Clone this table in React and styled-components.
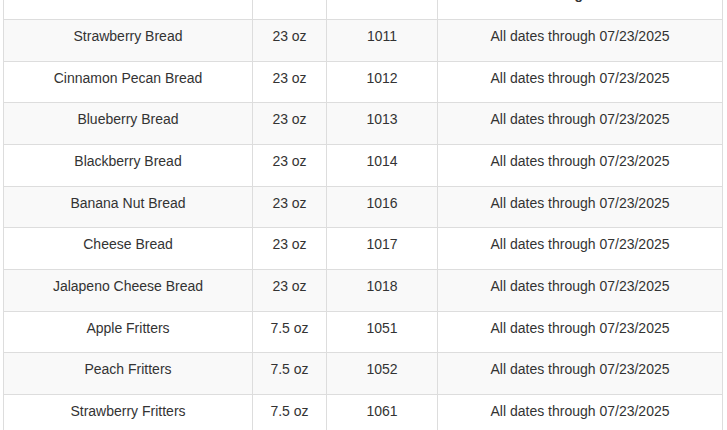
import styled, { createGlobalStyle } from 'styled-components';

const GlobalStyle = createGlobalStyle`
  html, body {
    margin: 0;
    padding: 0;
    background: #fff;
    overflow: hidden;
  }
  body {
    font-family: "Liberation Sans", Arial, Helvetica, sans-serif;
    font-size: 14px;
    color: #333;
  }
`;

const products = [
  { name: 'Strawberry Bread', size: '23 oz', code: '1011' },
  { name: 'Cinnamon Pecan Bread', size: '23 oz', code: '1012' },
  { name: 'Blueberry Bread', size: '23 oz', code: '1013' },
  { name: 'Blackberry Bread', size: '23 oz', code: '1014' },
  { name: 'Banana Nut Bread', size: '23 oz', code: '1016' },
  { name: 'Cheese Bread', size: '23 oz', code: '1017' },
  { name: 'Jalapeno Cheese Bread', size: '23 oz', code: '1018' },
  { name: 'Apple Fritters', size: '7.5 oz', code: '1051' },
  { name: 'Peach Fritters', size: '7.5 oz', code: '1052' },
  { name: 'Strawberry Fritters', size: '7.5 oz', code: '1061' },
];

const Wrapper = styled.div`
  padding: 0 4px 0 3px;
`;

const Table = styled.table`
  width: 720px;
  margin-top: -22.67px;
  border-collapse: collapse;
  table-layout: fixed;
  border: 1px solid #ddd;
`;

const Cell = styled.td`
  padding: 6px 8px 14.67px;
  line-height: 20px;
  text-align: center;
  vertical-align: top;
  border: 1px solid #ddd;
`;

const HeadCell = styled(Cell).attrs({ as: 'th' })`
  font-weight: 700;
`;

const Row = styled.tr`
  background: ${({ $striped }) => ($striped ? '#f9f9f9' : '#fff')};
`;

const App = () => {
  return (
    <>
      <GlobalStyle />
      <Wrapper>
        <Table>
          <colgroup>
            <col style={{ width: 249 }} />
            <col style={{ width: 74 }} />
            <col style={{ width: 111 }} />
            <col />
          </colgroup>
          <thead>
            <Row>
              <HeadCell>Product</HeadCell>
              <HeadCell>Size</HeadCell>
              <HeadCell>Item</HeadCell>
              <HeadCell>Coding Dates</HeadCell>
            </Row>
          </thead>
          <tbody>
            {products.map((p, i) => (
              <Row key={p.code} $striped={i % 2 === 0}>
                <Cell>{p.name}</Cell>
                <Cell>{p.size}</Cell>
                <Cell>{p.code}</Cell>
                <Cell>All dates through 07/23/2025</Cell>
              </Row>
            ))}
          </tbody>
        </Table>
      </Wrapper>
    </>
  );
};

export default App;
